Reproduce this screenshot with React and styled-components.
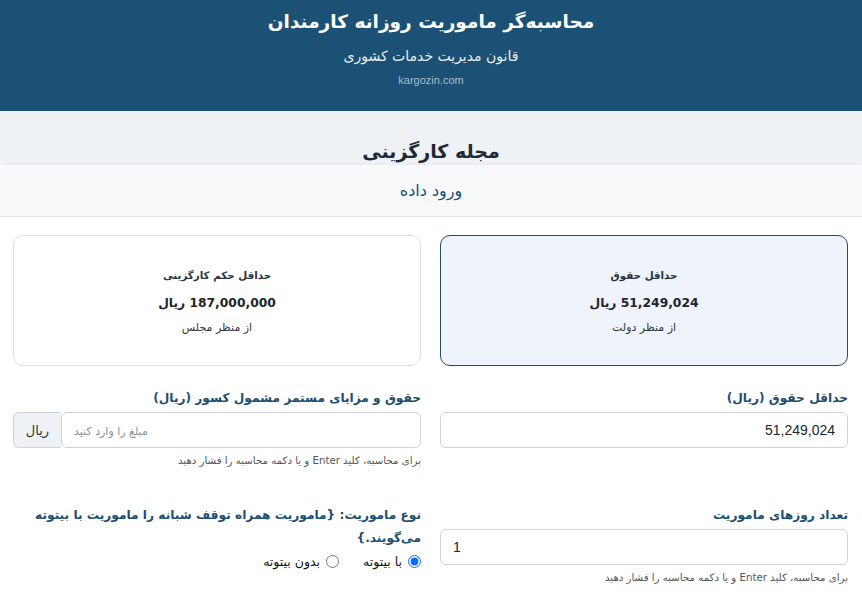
import styled, { createGlobalStyle } from "styled-components";

const GlobalStyle = createGlobalStyle`
    body {
        margin: 0;
        background: #fff;
        direction: rtl;
        font-family: "DejaVu Sans", "Noto Sans", sans-serif;
        color: #212529;
    }
    * { box-sizing: border-box; }
`;

const hint = "برای محاسبه، کلید Enter و یا دکمه محاسبه را فشار دهید";
const typeLabel =
    "نوع ماموریت: {ماموریت همراه توقف شبانه را ماموریت با بیتوته می‌گویند.}";

const App = () => {
    return (
        <>
            <GlobalStyle />
            <Header>
                <h1>محاسبه‌گر ماموریت روزانه کارمندان</h1>
                <p className='sub'>قانون مدیریت خدمات کشوری</p>
                <p className='site'>kargozin.com</p>
            </Header>
            <Band>
                <h2>مجله کارگزینی</h2>
            </Band>
            <Card>
                <CardHeader>ورود داده</CardHeader>
                <CardBody>
                    <StatBox active>
                        <span className='t'>حداقل حقوق</span>
                        <span className='v'>51,249,024 ریال</span>
                        <span className='s'>از منظر دولت</span>
                    </StatBox>
                    <StatBox>
                        <span className='t'>حداقل حکم کارگزینی</span>
                        <span className='v'>187,000,000 ریال</span>
                        <span className='s'>از منظر مجلس</span>
                    </StatBox>

                    <Field>
                        <Label>حداقل حقوق (ریال)</Label>
                        <Input defaultValue='51,249,024' />
                    </Field>
                    <Field>
                        <Label>حقوق و مزایای مستمر مشمول کسور (ریال)</Label>
                        <Group>
                            <Input placeholder='مبلغ را وارد کنید' align='left' />
                            <Addon>ریال</Addon>
                        </Group>
                        <Help>{hint}</Help>
                    </Field>

                    <Field top>
                        <Label>تعداد روزهای ماموریت</Label>
                        <Input defaultValue='1' align='left' />
                        <Help>{hint}</Help>
                    </Field>
                    <Field top>
                        <Label>{typeLabel}</Label>
                        <Radios>
                            <label>
                                <input type='radio' name='t' defaultChecked />
                                با بیتوته
                            </label>
                            <label>
                                <input type='radio' name='t' />
                                بدون بیتوته
                            </label>
                        </Radios>
                    </Field>
                </CardBody>
            </Card>
        </>
    );
};

const Header = styled.header`
    background: #1b5174;
    height: 111px;
    padding-top: 6px;
    text-align: center;
    color: #fff;
    h1 {
        margin: 0;
        font-size: 18.5px;
        line-height: 32px;
        font-weight: bold;
    }
    .sub {
        margin: 8px 0 0;
        font-size: 14px;
        line-height: 20px;
        color: #e9eef3;
    }
    .site {
        margin: 7px 0 0;
        font-family: "Liberation Sans", sans-serif;
        font-size: 11px;
        line-height: 14px;
        color: #a9bccb;
    }
`;

const Band = styled.div`
    background: #eef2f5;
    height: 54px;
    padding-top: 26px;
    text-align: center;
    h2 {
        margin: 0;
        font-size: 19px;
        line-height: 28px;
        font-weight: bold;
        color: #1f2a36;
    }
`;

const Card = styled.section`
    background: #fff;
    border-radius: 6px 6px 0 0;
    box-shadow: 0 -1px 3px rgba(0, 0, 0, 0.04);
`;

const CardHeader = styled.div`
    background: #f7f9fb;
    height: 52px;
    border-bottom: 1px solid #dfe3e7;
    border-radius: 6px 6px 0 0;
    display: flex;
    align-items: center;
    justify-content: center;
    font-size: 16px;
    color: #1b4f72;
`;

const CardBody = styled.div`
    display: grid;
    grid-template-columns: 1fr 1fr;
    column-gap: 19px;
    padding: 18px 14px 0 13px;
`;

const StatBox = styled.div`
    height: 131px;
    border: 1px solid ${({ active }) => (active ? "#2a4a66" : "#dee2e6")};
    background: ${({ active }) => (active ? "#eef3fc" : "#fff")};
    border-radius: 10px;
    display: flex;
    flex-direction: column;
    align-items: center;
    justify-content: center;
    padding-top: 2px;
    .t {
        font-size: 10.3px;
        font-weight: bold;
        color: #2a3440;
        line-height: 16px;
    }
    .v {
        margin-top: 11px;
        font-size: 12.3px;
        font-weight: bold;
        color: #212529;
        line-height: 18px;
    }
    .s {
        margin-top: 8px;
        font-size: 11px;
        color: #333;
        line-height: 16px;
    }
`;

const Field = styled.div`
    margin-top: ${({ top }) => (top ? "36px" : "21px")};
    display: flex;
    flex-direction: column;
`;

const Label = styled.div`
    font-size: 12.2px;
    font-weight: bold;
    color: #1b4f72;
    line-height: 23px;
    margin-bottom: 2px;
`;

const Input = styled.input`
    width: 100%;
    height: 36px;
    border: 1px solid #ced4da;
    border-radius: 6px;
    padding: 0 12px;
    font-family: "Liberation Sans", "DejaVu Sans", sans-serif;
    font-size: 14px;
    color: #212529;
    background: #fff;
    direction: rtl;
    text-align: ${({ align }) => align || "right"};
    &::placeholder {
        font-family: "DejaVu Sans", sans-serif;
        font-size: 11px;
        color: #8a8f95;
    }
`;

const Group = styled.div`
    display: flex;
`;

const Addon = styled.span`
    flex: 0 0 48px;
    height: 36px;
    display: flex;
    align-items: center;
    justify-content: center;
    background: #eef2f7;
    border: 1px solid #ced4da;
    border-right: none;
    border-radius: 6px 0 0 6px;
    font-size: 13px;
    color: #333;
`;

const Help = styled.div`
    margin-top: 6px;
    font-size: 10.2px;
    color: #555;
    line-height: 14px;
`;

const Radios = styled.div`
    display: flex;
    gap: 24px;
    margin-top: 2px;
    label {
        display: flex;
        align-items: center;
        gap: 6px;
        font-size: 12.5px;
        color: #111;
    }
    input {
        margin: 0;
        width: 13px;
        height: 13px;
        accent-color: #0d6efd;
    }
`;

export default App;
